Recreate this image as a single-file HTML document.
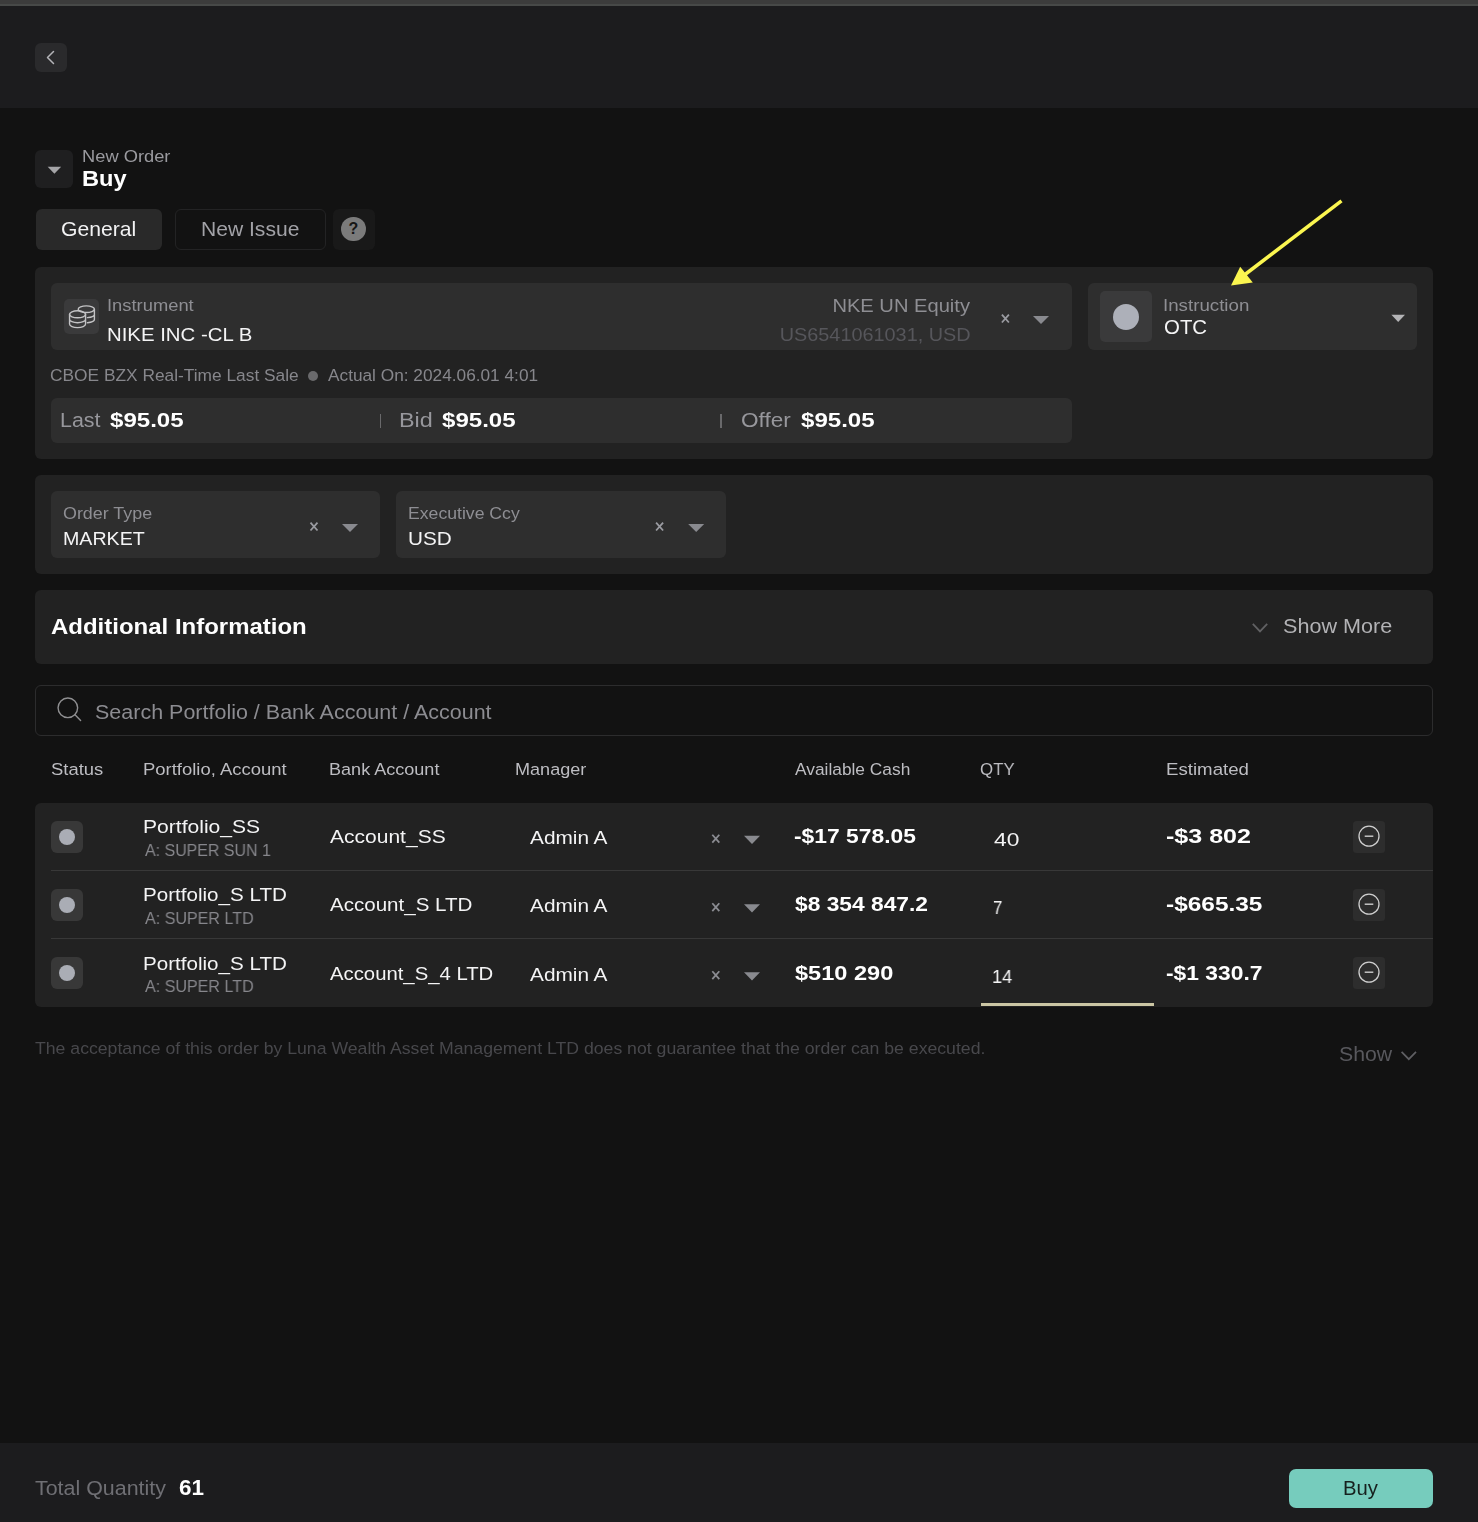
<!DOCTYPE html>
<html lang="en"><head><meta charset="utf-8"><title>New Order - Buy</title>
<style>
html,body{margin:0;padding:0}
body{width:1478px;height:1522px;position:relative;overflow:hidden;background:#121212;font-family:'Liberation Sans', sans-serif;}
.b{position:absolute;display:block}
.t{position:absolute;white-space:pre;line-height:1;transform-origin:0 50%;will-change:transform;font-family:'Liberation Sans', sans-serif;}
</style></head><body>
<header id="topbar">
<div class="b" style="left:0px;top:0px;width:1478px;height:108px;background:#1c1c1e;border-radius:0px;"></div>
<div class="b" style="left:0px;top:0px;width:1478px;height:4px;background:#3c3c3c;border-radius:0px;"></div>
<div class="b" style="left:0px;top:4px;width:1478px;height:2px;background:#474948;border-radius:0px;"></div>
<div class="b" style="left:35px;top:43px;width:32px;height:29px;background:#2a2a2c;border-radius:6px;"></div>
<svg class="b" style="left:35px;top:43px" width="32" height="29" viewBox="0 0 32 29"><path d="M18.5 8.5L12.5 14.5L18.5 20.5" stroke="#b4b4b8" stroke-width="1.5" fill="none" stroke-linecap="round" stroke-linejoin="round"/></svg>
</header>
<section id="order-title">
<div class="b" style="left:35px;top:150px;width:37.5px;height:37.5px;background:#1f1f20;border-radius:6px;"></div>
<svg class="b" style="left:42px;top:162px" width="24" height="16" viewBox="0 0 24 16"><path d="M5.65 4.70h13.5l-6.75 7z" fill="#a5a5a8"/></svg>
<span class="t" style="top:148.5px;font-size:16.7px;color:#9a9a9f;transform:scaleX(1.096);left:81.9px;">New Order</span>
<span class="t" style="top:168.5px;font-size:21.5px;color:#ffffff;font-weight:700;transform:scaleX(1.1);left:81.7px;">Buy</span>
</section>
<nav id="tabs">
<div class="b" style="left:36px;top:209px;width:126px;height:40.5px;background:#292929;border-radius:6px;"></div>
<div class="b" style="left:175px;top:209px;width:151px;height:40.5px;background:transparent;border-radius:6px;box-sizing:border-box;border:1px solid #232324;"></div>
<div class="b" style="left:333.3px;top:209px;width:41.7px;height:41px;background:#191919;border-radius:6px;"></div>
<div class="b q" style="left:341.2px;top:217.1px;width:24.4px;height:24.4px;border-radius:50%;background:#7b7b7b;color:#161616;font:700 16px/24.4px 'Liberation Sans', sans-serif;text-align:center">?</div>
<span class="t" style="top:219.7px;font-size:19.8px;color:#f2f2f3;transform:scaleX(1.069);left:60.8px;">General</span>
<span class="t" style="top:219.7px;font-size:19.8px;color:#a2a2a7;transform:scaleX(1.065);left:201.0px;">New Issue</span>
</nav>
<section id="instrument-panel">
<div class="b" style="left:35px;top:267px;width:1398px;height:192px;background:#222222;border-radius:6px;"></div>
<div class="b" style="left:51px;top:283px;width:1021px;height:67px;background:#2e2e2e;border-radius:6px;"></div>
<div class="b" style="left:64px;top:299px;width:35px;height:35px;background:#3a3a3b;border-radius:5px;"></div>
<svg class="b" style="left:64px;top:299px" width="35" height="35" viewBox="0 0 35 35" fill="none" stroke="#c3c3c5" stroke-width="1.4" stroke-linecap="round">
<ellipse cx="22.3" cy="10.2" rx="8.1" ry="3.3"/><path d="M30.4 10.2v10.4c0 1.5-2.8 2.8-7 3.2M30.4 15.4c0 1.5-2.8 2.8-7 3.2"/>
<ellipse cx="13.55" cy="15.3" rx="8" ry="3.5"/><path d="M5.55 15.3v9.8c0 1.95 3.6 3.5 8 3.5s8-1.55 8-3.5V15.3M5.55 20.2c0 1.95 3.6 3.5 8 3.5s8-1.55 8-3.5"/></svg>
<svg class="b" style="left:997px;top:310px" width="16" height="16" viewBox="0 0 16 16"><path d="M4.90 4.70L11.90 12.50M11.90 4.70L4.90 12.50" stroke="#9a9ba1" stroke-width="1.8" fill="none"/></svg>
<svg class="b" style="left:1029px;top:312px" width="24" height="16" viewBox="0 0 24 16"><path d="M4.00 3.90h16l-8.0 8.2z" fill="#898a8f"/></svg>
<div class="b" style="left:1088px;top:283px;width:329px;height:67px;background:#2e2e2e;border-radius:6px;"></div>
<div class="b" style="left:1100px;top:291px;width:52px;height:51px;background:#3a3a3b;border-radius:5px;"></div>
<div class="b" style="left:1112.7px;top:303.7px;width:26.6px;height:26.6px;background:#adb0b9;border-radius:50px;border-radius:50%;"></div>
<svg class="b" style="left:1386px;top:310px" width="24" height="16" viewBox="0 0 24 16"><path d="M5.40 4.80h13.6l-6.8 7.2z" fill="#b4b4b6"/></svg>
<div class="b" style="left:308px;top:371px;width:10px;height:10px;background:#6a6a6c;border-radius:50px;border-radius:50%;"></div>
<div class="b" style="left:51px;top:398px;width:1021px;height:45px;background:#2e2e2e;border-radius:6px;"></div>
<div class="b" style="left:380px;top:413.5px;width:1.3px;height:14px;background:#69696b;border-radius:0px;"></div>
<div class="b" style="left:720.3px;top:413.5px;width:1.3px;height:14px;background:#69696b;border-radius:0px;"></div>
<span class="t" style="top:297.5px;font-size:16.7px;color:#8e8e93;transform:scaleX(1.1);left:107.3px;">Instrument</span>
<span class="t" style="top:325.4px;font-size:19px;color:#f4f4f5;transform:scaleX(1.072);left:107.4px;">NIKE INC -CL B</span>
<span class="t" style="top:296.6px;font-size:18.3px;color:#8e8e93;transform:scaleX(1.101);right:507.6px;transform-origin:100% 50%;">NKE UN Equity</span>
<span class="t" style="top:325.5px;font-size:18.8px;color:#56565b;transform:scaleX(1.057);right:506.9px;transform-origin:100% 50%;">US6541061031, USD</span>
<span class="t" style="top:297.6px;font-size:16.7px;color:#8e8e93;transform:scaleX(1.121);left:1163.1px;">Instruction</span>
<span class="t" style="top:317.8px;font-size:19.4px;color:#f4f4f5;transform:scaleX(1.053);left:1164.0px;">OTC</span>
<span class="t" style="top:367.6px;font-size:16.7px;color:#87878c;transform:scaleX(1.038);left:50.0px;">CBOE BZX Real-Time Last Sale</span>
<span class="t" style="top:367.6px;font-size:16.7px;color:#87878c;transform:scaleX(1.034);left:327.8px;">Actual On: 2024.06.01 4:01</span>
<span class="t" style="top:410.9px;font-size:19.3px;color:#97979c;transform:scaleX(1.11);left:59.9px;">Last</span>
<span class="t" style="top:410.3px;font-size:20px;color:#ffffff;font-weight:700;transform:scaleX(1.204);left:110.3px;">$95.05</span>
<span class="t" style="top:410.9px;font-size:19.3px;color:#97979c;transform:scaleX(1.214);left:398.8px;">Bid</span>
<span class="t" style="top:410.3px;font-size:20px;color:#ffffff;font-weight:700;transform:scaleX(1.204);left:441.9px;">$95.05</span>
<span class="t" style="top:410.9px;font-size:19.3px;color:#97979c;transform:scaleX(1.17);left:740.6px;">Offer</span>
<span class="t" style="top:410.3px;font-size:20px;color:#ffffff;font-weight:700;transform:scaleX(1.204);left:800.5px;">$95.05</span>
</section>
<section id="order-params">
<div class="b" style="left:35px;top:475px;width:1398px;height:99px;background:#222222;border-radius:6px;"></div>
<div class="b" style="left:51px;top:491px;width:329px;height:67px;background:#2e2e2e;border-radius:6px;"></div>
<svg class="b" style="left:306px;top:518px" width="16" height="16" viewBox="0 0 16 16"><path d="M4.50 4.70L11.50 12.50M11.50 4.70L4.50 12.50" stroke="#9a9ba1" stroke-width="1.8" fill="none"/></svg>
<svg class="b" style="left:338px;top:520px" width="24" height="16" viewBox="0 0 24 16"><path d="M4.00 3.90h16l-8.0 8.2z" fill="#898a8f"/></svg>
<div class="b" style="left:396px;top:491px;width:330px;height:67px;background:#2e2e2e;border-radius:6px;"></div>
<svg class="b" style="left:651px;top:518px" width="16" height="16" viewBox="0 0 16 16"><path d="M5.10 4.70L12.10 12.50M12.10 4.70L5.10 12.50" stroke="#9a9ba1" stroke-width="1.8" fill="none"/></svg>
<svg class="b" style="left:684px;top:520px" width="24" height="16" viewBox="0 0 24 16"><path d="M4.20 3.90h16l-8.0 8.2z" fill="#898a8f"/></svg>
<span class="t" style="top:505.6px;font-size:16.7px;color:#8e8e93;transform:scaleX(1.072);left:63.4px;">Order Type</span>
<span class="t" style="top:529.0px;font-size:19.2px;color:#f4f4f5;transform:scaleX(1.023);left:63.0px;">MARKET</span>
<span class="t" style="top:505.6px;font-size:16.7px;color:#8e8e93;transform:scaleX(1.057);left:408.3px;">Executive Ccy</span>
<span class="t" style="top:529.0px;font-size:19.2px;color:#f4f4f5;transform:scaleX(1.08);left:407.8px;">USD</span>
</section>
<section id="additional-info">
<div class="b" style="left:35px;top:590px;width:1398px;height:74px;background:#222222;border-radius:6px;"></div>
<svg class="b" style="left:1250px;top:620px" width="20" height="16" viewBox="0 0 20 16"><path d="M2.8 3.9L10 11.4L17.2 3.9" stroke="#616163" stroke-width="1.8" fill="none"/></svg>
<span class="t" style="top:615.5px;font-size:22px;color:#ffffff;font-weight:700;transform:scaleX(1.09);left:50.5px;">Additional Information</span>
<span class="t" style="top:616.7px;font-size:19.8px;color:#b2b2b5;transform:scaleX(1.092);left:1282.9px;">Show More</span>
</section>
<section id="search">
<div class="b" style="left:35px;top:685px;width:1398px;height:51px;background:transparent;border-radius:6px;box-sizing:border-box;border:1px solid #2c2c2d;"></div>
<svg class="b" style="left:55px;top:695px" width="30" height="30" viewBox="0 0 30 30"><circle cx="12.85" cy="12.85" r="9.8" stroke="#8f8f91" stroke-width="1.4" fill="none"/><path d="M20 19.8L25.6 25.5" stroke="#8f8f91" stroke-width="1.4" stroke-linecap="round"/></svg>
<span class="t" style="top:702.7px;font-size:19.5px;color:#8c8c91;transform:scaleX(1.102);left:95.3px;">Search Portfolio / Bank Account / Account</span>
</section>
<section id="table-head">
<span class="t" style="top:761.6px;font-size:16.9px;color:#bdbdc2;transform:scaleX(1.091);left:50.6px;">Status</span>
<span class="t" style="top:761.6px;font-size:16.9px;color:#bdbdc2;transform:scaleX(1.093);left:142.7px;">Portfolio, Account</span>
<span class="t" style="top:761.6px;font-size:16.9px;color:#bdbdc2;transform:scaleX(1.069);left:329.2px;">Bank Account</span>
<span class="t" style="top:761.6px;font-size:16.9px;color:#bdbdc2;transform:scaleX(1.07);left:515.0px;">Manager</span>
<span class="t" style="top:761.6px;font-size:16.9px;color:#bdbdc2;transform:scaleX(1.026);left:795.0px;">Available Cash</span>
<span class="t" style="top:761.6px;font-size:16.9px;color:#bdbdc2;transform:scaleX(0.996);left:979.8px;">QTY</span>
<span class="t" style="top:761.6px;font-size:16.9px;color:#bdbdc2;transform:scaleX(1.105);left:1166.0px;">Estimated</span>
</section>
<section id="allocations">
<div class="b" style="left:35px;top:803px;width:1398px;height:204px;background:#222222;border-radius:6px;"></div>
<div class="b" style="left:51px;top:870px;width:1382px;height:1px;background:#383838;border-radius:0px;"></div>
<div class="b" style="left:51px;top:938px;width:1382px;height:1px;background:#383838;border-radius:0px;"></div>
<div class="b" style="left:51px;top:821px;width:32px;height:32px;background:#383838;border-radius:6px;"></div>
<div class="b" style="left:58.8px;top:829px;width:16px;height:16px;background:#aaadb5;border-radius:50px;border-radius:50%;"></div>
<svg class="b" style="left:707px;top:830px" width="16" height="16" viewBox="0 0 16 16"><path d="M5.30 4.75L12.30 12.55M12.30 4.75L5.30 12.55" stroke="#8b8c92" stroke-width="1.8" fill="none"/></svg>
<svg class="b" style="left:740px;top:831px" width="24" height="16" viewBox="0 0 24 16"><path d="M4.00 4.70h16l-8.0 8.2z" fill="#898a8f"/></svg>
<div class="b" style="left:1353px;top:821px;width:32px;height:32px;background:#2d2d2d;border-radius:3.5px;"></div>
<svg class="b" style="left:1353px;top:821px" width="32" height="32" viewBox="0 0 32 32"><circle cx="16" cy="15.2" r="10" stroke="#cfcfcf" stroke-width="1.3" fill="none"/><path d="M11.7 15.2H20.3" stroke="#cfcfcf" stroke-width="1.4"/></svg>
<div class="b" style="left:51px;top:889px;width:32px;height:32px;background:#383838;border-radius:6px;"></div>
<div class="b" style="left:58.8px;top:897px;width:16px;height:16px;background:#aaadb5;border-radius:50px;border-radius:50%;"></div>
<svg class="b" style="left:707px;top:899px" width="16" height="16" viewBox="0 0 16 16"><path d="M5.30 4.25L12.30 12.05M12.30 4.25L5.30 12.05" stroke="#8b8c92" stroke-width="1.8" fill="none"/></svg>
<svg class="b" style="left:740px;top:900px" width="24" height="16" viewBox="0 0 24 16"><path d="M4.00 4.20h16l-8.0 8.2z" fill="#898a8f"/></svg>
<div class="b" style="left:1353px;top:889px;width:32px;height:32px;background:#2d2d2d;border-radius:3.5px;"></div>
<svg class="b" style="left:1353px;top:889px" width="32" height="32" viewBox="0 0 32 32"><circle cx="16" cy="15.2" r="10" stroke="#cfcfcf" stroke-width="1.3" fill="none"/><path d="M11.7 15.2H20.3" stroke="#cfcfcf" stroke-width="1.4"/></svg>
<div class="b" style="left:51px;top:957px;width:32px;height:32px;background:#383838;border-radius:6px;"></div>
<div class="b" style="left:58.8px;top:965px;width:16px;height:16px;background:#aaadb5;border-radius:50px;border-radius:50%;"></div>
<svg class="b" style="left:707px;top:967px" width="16" height="16" viewBox="0 0 16 16"><path d="M5.30 4.25L12.30 12.05M12.30 4.25L5.30 12.05" stroke="#8b8c92" stroke-width="1.8" fill="none"/></svg>
<svg class="b" style="left:740px;top:968px" width="24" height="16" viewBox="0 0 24 16"><path d="M4.00 4.20h16l-8.0 8.2z" fill="#898a8f"/></svg>
<div class="b" style="left:1353px;top:957px;width:32px;height:32px;background:#2d2d2d;border-radius:3.5px;"></div>
<svg class="b" style="left:1353px;top:957px" width="32" height="32" viewBox="0 0 32 32"><circle cx="16" cy="15.2" r="10" stroke="#cfcfcf" stroke-width="1.3" fill="none"/><path d="M11.7 15.2H20.3" stroke="#cfcfcf" stroke-width="1.4"/></svg>
<div class="b" style="left:981px;top:1002.7px;width:173px;height:3.6px;background:#cbc6a4;border-radius:0px;"></div>
<span class="t" style="top:817.5px;font-size:18.8px;color:#f4f4f5;transform:scaleX(1.122);left:143.1px;">Portfolio_SS</span>
<span class="t" style="top:841.6px;font-size:16.5px;color:#87878c;transform:scaleX(0.967);left:144.8px;">A: SUPER SUN 1</span>
<span class="t" style="top:827.7px;font-size:18.8px;color:#f4f4f5;transform:scaleX(1.119);left:329.9px;">Account_SS</span>
<span class="t" style="top:828.5px;font-size:18.8px;color:#f4f4f5;transform:scaleX(1.108);left:529.5px;">Admin A</span>
<span class="t" style="top:826.4px;font-size:20px;color:#ffffff;font-weight:700;transform:scaleX(1.142);left:794.2px;">-$17 578.05</span>
<span class="t" style="top:830.5px;font-size:18.6px;color:#f4f4f5;transform:scaleX(1.227);left:993.9px;">40</span>
<span class="t" style="top:826.4px;font-size:20px;color:#ffffff;font-weight:700;transform:scaleX(1.253);left:1166.2px;">-$3 802</span>
<span class="t" style="top:885.5px;font-size:18.8px;color:#f4f4f5;transform:scaleX(1.097);left:143.3px;">Portfolio_S LTD</span>
<span class="t" style="top:909.6px;font-size:16.5px;color:#87878c;transform:scaleX(0.974);left:144.8px;">A: SUPER LTD</span>
<span class="t" style="top:895.7px;font-size:18.8px;color:#f4f4f5;transform:scaleX(1.094);left:329.9px;">Account_S LTD</span>
<span class="t" style="top:896.5px;font-size:18.8px;color:#f4f4f5;transform:scaleX(1.108);left:529.5px;">Admin A</span>
<span class="t" style="top:894.4px;font-size:20px;color:#ffffff;font-weight:700;transform:scaleX(1.139);left:795.0px;">$8 354 847.2</span>
<span class="t" style="top:898.5px;font-size:18.6px;color:#f4f4f5;transform:scaleX(0.909);left:993.0px;">7</span>
<span class="t" style="top:894.4px;font-size:20px;color:#ffffff;font-weight:700;transform:scaleX(1.221);left:1166.2px;">-$665.35</span>
<span class="t" style="top:954.5px;font-size:18.8px;color:#f4f4f5;transform:scaleX(1.097);left:143.3px;">Portfolio_S LTD</span>
<span class="t" style="top:977.9px;font-size:16.5px;color:#87878c;transform:scaleX(0.974);left:144.8px;">A: SUPER LTD</span>
<span class="t" style="top:964.7px;font-size:18.8px;color:#f4f4f5;transform:scaleX(1.081);left:330.0px;">Account_S_4 LTD</span>
<span class="t" style="top:965.5px;font-size:18.8px;color:#f4f4f5;transform:scaleX(1.108);left:529.5px;">Admin A</span>
<span class="t" style="top:962.9px;font-size:20px;color:#ffffff;font-weight:700;transform:scaleX(1.179);left:794.9px;">$510 290</span>
<span class="t" style="top:967.5px;font-size:18.6px;color:#f4f4f5;transform:scaleX(0.98);left:992.2px;">14</span>
<span class="t" style="top:962.9px;font-size:20px;color:#ffffff;font-weight:700;transform:scaleX(1.141);left:1166.2px;">-$1 330.7</span>
</section>
<section id="disclaimer">
<svg class="b" style="left:1399px;top:1048px" width="20" height="16" viewBox="0 0 20 16"><path d="M2.6 3.9L9.8 11.2L17 3.9" stroke="#5f5f63" stroke-width="1.7" fill="none"/></svg>
<span class="t" style="top:1040.6px;font-size:16.7px;color:#48484c;transform:scaleX(1.058);left:35.1px;">The acceptance of this order by Luna Wealth Asset Management LTD does not guarantee that the order can be executed.</span>
<span class="t" style="top:1044.6px;font-size:19.5px;color:#58585d;transform:scaleX(1.091);left:1339.1px;">Show</span>
</section>
<footer id="footer">
<div class="b" style="left:0px;top:1442.5px;width:1478px;height:79.5px;background:#1c1c1e;border-radius:0px;"></div>
<div class="b" style="left:1289px;top:1469px;width:144px;height:39px;background:#76ccbd;border-radius:7px;"></div>
<span class="t" style="top:1478.6px;font-size:19.5px;color:#6f6f74;transform:scaleX(1.098);left:34.8px;">Total Quantity</span>
<span class="t" style="top:1477.7px;font-size:21.5px;color:#ffffff;font-weight:700;transform:scaleX(1.045);left:178.6px;">61</span>
<span class="t" style="top:1478.6px;font-size:19.3px;color:#16201e;transform:scaleX(1.052);left:1342.8px;">Buy</span>
</footer>
<aside id="annotation">
<svg class="b" style="left:1220px;top:190px" width="140" height="110" viewBox="1220 190 140 110"><path d="M1341.5 200.8L1243 276" stroke="#fbf650" stroke-width="3.5" fill="none"/><path d="M1231 285.5L1240.2 266.8L1252.8 282.4Z" fill="#fbf650"/></svg>
</aside>
</body></html>
